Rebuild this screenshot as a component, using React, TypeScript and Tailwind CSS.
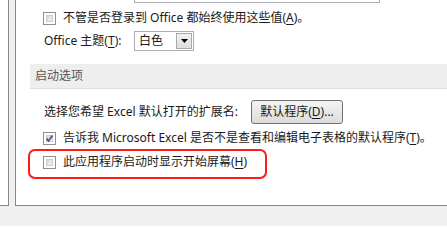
import React from "react";

const font = { fontFamily: '"Noto Sans", "Noto Sans CJK SC", sans-serif' };

function Check({ checked }: { checked?: boolean }) {
  return (
    <div className="relative w-[13px] h-[13px] shrink-0 border border-[#8f8f8f] bg-white">
      <div className="absolute inset-[2px] bg-gradient-to-br from-[#d9d9d9] to-[#f7f7f7] border border-[#c9c9c9]" />
      {checked && (
        <svg className="absolute left-[1px] top-[1px]" width="9" height="9" viewBox="0 0 9 9">
          <path d="M1.5 4.5 L3.5 7 L7.5 1.5" fill="none" stroke="#3b4f8f" strokeWidth="1.6" />
        </svg>
      )}
    </div>
  );
}

function U({ c }: { c: string }) {
  return <span className="underline underline-offset-[2px]">{c}</span>;
}

export default function App() {
  return (
    <div
      className="relative w-[447px] h-[226px] overflow-hidden bg-[#f0f0f0] text-[12px] leading-[16px] text-[#1a1a1a]"
      style={font}
    >
      <div className="flex items-start">
        <div className="w-[9px] h-[206px] bg-white border-r border-b border-[#828790]" />
        <div className="ml-[6px] flex-1 h-[206px] bg-white border-l border-b border-[#828790] flex flex-col">
          <div className="ml-[118px] w-[246px] h-[3px] border-x border-b border-[#abadb3]" />
          <div className="mt-[7px] h-[16px] pl-[27px] flex items-center gap-[7px] whitespace-nowrap">
            <Check />
            <span>
              不管是否登录到 Office 都始终使用这些值(<U c="A" />)。
            </span>
          </div>
          <div className="mt-[5px] h-[20px] pl-[28px] flex items-center whitespace-nowrap">
            <span className="w-[90px]">
              Office 主题(<U c="T" />):
            </span>
            <div className="relative w-[60px] h-[20px] border border-[#abadb3] bg-white flex items-center pl-[4px]">
              <span>白色</span>
              <div className="absolute right-[1px] top-[1px] bottom-[1px] w-[16px] border border-[#a9a9a9] bg-gradient-to-b from-[#f2f2f2] to-[#dedede] flex items-center justify-center">
                <svg width="7" height="4" viewBox="0 0 7 4">
                  <path d="M0 0 H7 L3.5 4 Z" fill="#000" />
                </svg>
              </div>
            </div>
          </div>
          <div className="mt-[13px] ml-[14px] h-[25px] bg-[#eeeeee] border-b border-[#dedede] flex items-center pl-[5px] text-[#555555]">
            启动选项
          </div>
          <div className="mt-[11px] h-[24px] pl-[28px] flex items-center whitespace-nowrap">
            <span className="w-[207px]">选择您希望 Excel 默认打开的扩展名:</span>
            <div className="w-[92px] h-[24px] rounded-[3px] border border-[#707070] bg-gradient-to-b from-[#f4f4f4] to-[#dcdcdc] flex items-center justify-center">
              默认程序(<U c="D" />)...
            </div>
          </div>
          <div className="mt-[6px] h-[16px] pl-[27px] flex items-center gap-[7px] whitespace-nowrap">
            <Check checked />
            <span>
              告诉我 Microsoft Excel 是否不是查看和编辑电子表格的默认程序(<U c="T" />)。
            </span>
          </div>
          <div className="mt-[8px] h-[16px] pl-[27px] flex items-center gap-[7px] whitespace-nowrap">
            <Check />
            <span>
              此应用程序启动时显示开始屏幕(<U c="H" />)
            </span>
          </div>
        </div>
      </div>
      <div className="absolute left-[28px] top-[149px] w-[239px] h-[30px] border-2 border-[#ff1a1a] rounded-[7px]" />
    </div>
  );
}
